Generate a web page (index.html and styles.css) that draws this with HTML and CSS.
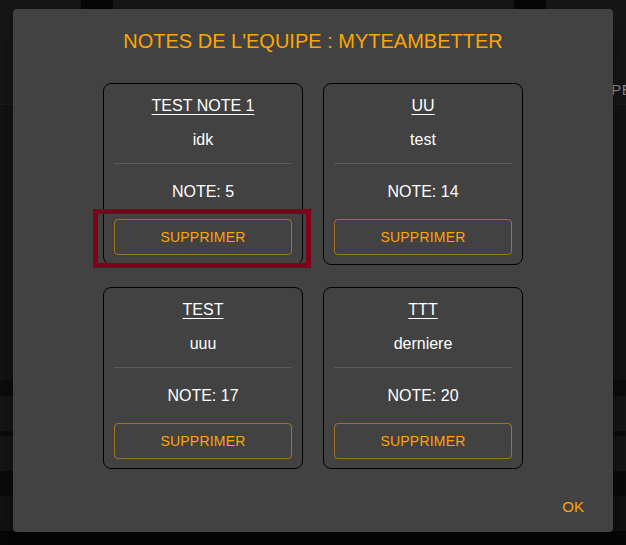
FILE: index.html
```html
<!DOCTYPE html>
<html lang="fr">
<head>
<meta charset="utf-8">
<title>Notes de l'equipe</title>
<link rel="stylesheet" href="styles.css">
</head>
<body>
<div class="backdrop">
  <div class="bd-header">
    <div class="bd-tab bd-tab-a"></div>
    <div class="bd-tab bd-tab-b"></div>
    <span class="bd-label">TYPE</span>
  </div>
  <div class="bd-body"></div>
  <div class="bd-band dark"></div>
  <div class="bd-band row"></div>
  <div class="bd-band thin"></div>
  <div class="bd-band row"></div>
  <div class="bd-band dark2"></div>
  <div class="bd-band row2"></div>
  <div class="bd-band foot"></div>
</div>

<div class="modal">
  <h2 class="modal-title">NOTES DE L'EQUIPE : MYTEAMBETTER</h2>
  <div class="grid">
    <div class="card">
      <div class="card-title">TEST NOTE 1</div>
      <div class="card-desc">idk</div>
      <div class="divider"></div>
      <div class="card-note">NOTE: 5</div>
      <button class="btn-delete">SUPPRIMER</button>
      <div class="highlight"></div>
    </div>
    <div class="card">
      <div class="card-title">UU</div>
      <div class="card-desc">test</div>
      <div class="divider"></div>
      <div class="card-note">NOTE: 14</div>
      <button class="btn-delete">SUPPRIMER</button>
    </div>
    <div class="card">
      <div class="card-title">TEST</div>
      <div class="card-desc">uuu</div>
      <div class="divider"></div>
      <div class="card-note">NOTE: 17</div>
      <button class="btn-delete">SUPPRIMER</button>
    </div>
    <div class="card">
      <div class="card-title">TTT</div>
      <div class="card-desc">derniere</div>
      <div class="divider"></div>
      <div class="card-note">NOTE: 20</div>
      <button class="btn-delete">SUPPRIMER</button>
    </div>
  </div>
  <div class="actions">
    <button class="btn-ok">OK</button>
  </div>
</div>
</body>
</html>
```
FILE: styles.css
```css
* { box-sizing: border-box; }
html, body { margin: 0; padding: 0; }
body {
  width: 626px;
  height: 545px;
  overflow: hidden;
  background: #0b0b0b;
  font-family: "Liberation Sans", Arial, sans-serif;
  position: relative;
}
.backdrop {
  display: flex;
  flex-direction: column;
  height: 545px;
}
.bd-header {
  height: 105px;
  background: #161616;
  position: relative;
  border-bottom: 1px solid #1c1c1c;
}
.bd-tab {
  position: absolute;
  top: 0;
  height: 9px;
  background: #070707;
}
.bd-tab-a { left: 81px; width: 32px; }
.bd-tab-b { left: 514px; width: 32px; }
.bd-label {
  position: absolute;
  left: 591px;
  top: 81px;
  font-size: 15px;
  color: #7d8c97;
  letter-spacing: 0.5px;
}
.bd-body { height: 275px; background: #131313; }
.bd-band.dark { height: 16px; background: #0c0c0c; }
.bd-band.row { height: 35px; background: #151515; }
.bd-band.thin { height: 5px; background: #0c0c0c; }
.bd-band.dark2 { height: 25px; background: #0a0a0a; }
.bd-band.row2 { height: 35px; background: #111; }
.bd-band.foot { flex: 1; background: #060606; }

.modal {
  position: absolute;
  left: 13px;
  top: 9px;
  width: 600px;
  height: 523px;
  background: #424242;
  border-radius: 4px;
  box-shadow: 0 11px 15px -7px rgba(0,0,0,0.2), 0 24px 38px 3px rgba(0,0,0,0.14);
  display: flex;
  flex-direction: column;
  padding-top: 20px;
}
.modal-title {
  margin: 0;
  text-align: center;
  font-size: 20px;
  font-weight: 400;
  line-height: 24px;
  color: #ffa500;
}
.grid {
  margin-top: 30px;
  display: grid;
  grid-template-columns: 200px 200px;
  justify-content: center;
  column-gap: 20px;
  row-gap: 22px;
}
.card {
  position: relative;
  border: 1px solid #000;
  border-radius: 8px;
  padding: 10px 10px 9px;
  display: flex;
  flex-direction: column;
  color: #fff;
  text-align: center;
  font-size: 16px;
}
.card-title {
  line-height: 24px;
  text-decoration: underline;
  text-underline-offset: 3px;
}
.card-desc {
  margin-top: 10px;
  line-height: 24px;
}
.divider {
  margin-top: 11px;
  height: 1px;
  background: rgba(255,255,255,0.14);
}
.card-note {
  margin-top: 16px;
  line-height: 24px;
}
.btn-delete {
  margin-top: 15px;
  height: 36px;
  width: 100%;
  background: transparent;
  border: 1px solid rgba(255,165,0,0.5);
  border-radius: 4px;
  color: #ffa500;
  font-family: "Liberation Sans", Arial, sans-serif;
  font-size: 14px;
  letter-spacing: 0.2px;
  padding: 0;
}
.highlight {
  position: absolute;
  left: -11px;
  top: 125px;
  width: 218px;
  height: 59px;
  border: 5px solid #80001a;
  pointer-events: none;
}
.actions {
  margin-top: 28px;
  display: flex;
  justify-content: flex-end;
  padding-right: 21px;
}
.btn-ok {
  background: transparent;
  border: 0;
  color: #ffa500;
  font-family: "Liberation Sans", Arial, sans-serif;
  font-size: 15px;
  line-height: 20px;
  padding: 0 8px;
}
```
